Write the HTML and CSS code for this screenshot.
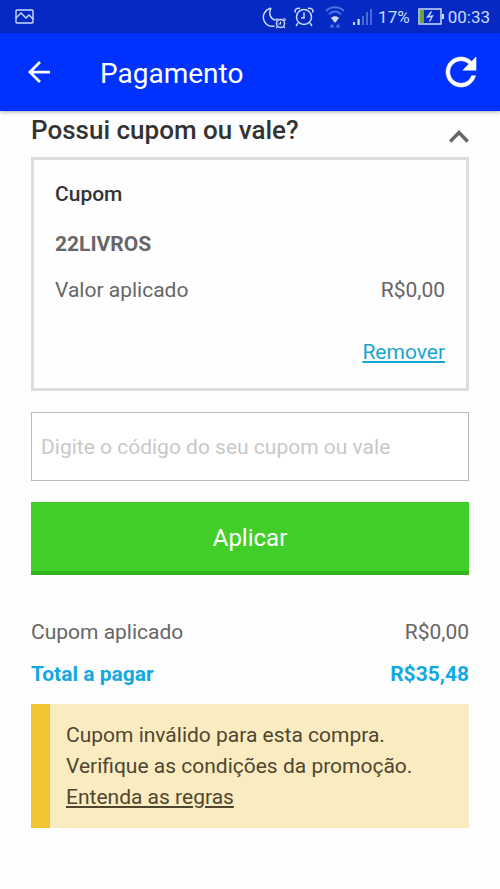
FILE: index.html
```html
<!DOCTYPE html>
<html lang="pt-BR">
<head>
<meta charset="utf-8">
<meta name="viewport" content="width=device-width, initial-scale=1">
<title>Pagamento</title>
<link rel="stylesheet" href="styles.css">
</head>
<body>
<div class="status-bar">
  <svg class="status-photo" width="20" height="16" viewBox="0 0 20 16" fill="none" stroke="currentColor" stroke-width="1.4"><rect x="1" y="1" width="17" height="13" rx="1"/><path d="M1 9l5-5 5 5 3-3 4 4"/></svg>
  <div class="status-icons">
    <svg width="24" height="24" viewBox="0 0 24 24" fill="none" stroke="currentColor" stroke-width="1.5"><path d="M9 1C3 3 0 8 2 13.500c1.500 4.500 6 6.500 10.500 5.500M9 1C6.500 6.500 8 11.500 13 13"/><circle cx="18.500" cy="16.500" r="4"/><path d="M18.500 14.500V17h-2M14 14v-2h2.500M23 14v-2h-2.500M15.500 19.500L14 21M21.500 19.500L23 21" stroke-width="1.200"/></svg>
    <svg width="20" height="22" viewBox="0 0 20 22" fill="none" stroke="currentColor" stroke-width="1.500"><circle cx="10" cy="11" r="7.500"/><path d="M10 6.500V12l-3 0M1.500 6.500c-1.500-3 1.500-5 4.500-4M18.500 6.500c1.500-3-1.500-5-4.500-4M4 17l-2 3M16 17l2 3"/></svg>
    <svg class="wifi" width="20" height="22" viewBox="0 0 20 22" fill="none"><g stroke="#4971df" stroke-width="1.800"><path d="M1 5c5-5 13-5 18 0"/><path d="M4 8.500c3-4 9-4 12 0"/></g><path d="M6 12c2-2.500 6-2.500 8 0l-4 5z" fill="currentColor"/><path d="M4.500 21.500L7 17.500l2.500 4zM10.500 21.500l2.500-4 2.500 4z" fill="#4971df"/></svg>
    <svg class="signal" width="20" height="18" viewBox="0 0 20 18"><path d="M0 14h2v3H0zM4.500 11h2.200v6H4.500z" fill="currentColor"/><path d="M9 8h2v9H9zM13 4h2v13h-2zM17 1h2v16h-2z" fill="#4669dc"/></svg>
    <span class="battery-level">17%</span>
    <svg class="battery" width="26" height="17" viewBox="0 0 26 17"><rect x="1" y="1" width="22" height="15" fill="none" stroke="currentColor" stroke-width="1.500"/><path d="M2 2h4v13H2z" fill="#6ba434"/><path d="M24 6h2v5h-2z" fill="currentColor"/><path d="M13.500 3.500l-4 5.500 5-1-3 5.500" fill="none" stroke="currentColor" stroke-width="1.300"/></svg>
    <span class="clock">00:33</span>
  </div>
</div>
<header class="app-bar">
  <button class="icon-button" type="button" aria-label="Voltar"><svg width="22" height="22" viewBox="4 4 16 16" fill="currentColor"><path d="M20 11H7.830l5.590-5.590L12 4l-8 8 8 8 1.410-1.410L7.830 13H20v-2z"/></svg></button>
  <h1 class="app-title">Pagamento</h1>
  <button class="icon-button" type="button" aria-label="Atualizar"><svg width="30" height="30" viewBox="4 4 16 16" fill="currentColor" stroke="currentColor" stroke-width="0.3"><path d="M17.650 6.350C16.200 4.900 14.210 4 12 4c-4.420 0-7.990 3.580-7.990 8s3.570 8 7.990 8c3.730 0 6.840-2.550 7.730-6h-2.080c-.82 2.330-3.040 4-5.650 4-3.310 0-6-2.690-6-6s2.690-6 6-6c1.660 0 3.140.69 4.220 1.780L13 11h7V4l-2.350 2.350z"/></svg></button>
</header>
<main class="content">
  <div class="section-head">
    <h2 class="section-title">Possui cupom ou vale?</h2>
    <button class="icon-button collapse" type="button" aria-label="Recolher"><svg width="20" height="14" viewBox="0 0 20 14" fill="none" stroke="currentColor" stroke-width="3.400"><path d="M1.300 12.500L10 3.500l8.700 9"/></svg></button>
  </div>
  <section class="coupon">
    <h3 class="coupon-title">Cupom</h3>
    <p class="coupon-code">22LIVROS</p>
    <div class="row"><span>Valor aplicado</span><span>R$0,00</span></div>
    <a class="remove" href="#">Remover</a>
  </section>
  <form class="coupon-form">
    <input class="field" type="text" aria-label="Código do cupom ou vale" placeholder="Digite o código do seu cupom ou vale">
    <button class="apply" type="button">Aplicar</button>
  </form>
  <div class="summary">
    <div class="row"><span>Cupom aplicado</span><span>R$0,00</span></div>
    <div class="row total"><span>Total a pagar</span><span>R$35,48</span></div>
  </div>
  <div class="alert" role="alert">
    <p>Cupom inválido para esta compra.</p>
    <p>Verifique as condições da promoção.</p>
    <a class="rules" href="#">Entenda as regras</a>
  </div>
</main>
</body>
</html>
```
FILE: styles.css
```css
* {
  box-sizing: border-box;
}

body {
  margin: 0;
  background: #fefefe;
  color: #666;
  font-family: Roboto, "Liberation Sans", sans-serif;
  font-size: 21px;
  line-height: 24px;
}

h1, h2, h3, p {
  margin: 0;
}

svg {
  display: block;
  flex: none;
}

button, input {
  font: inherit;
}

.status-bar {
  display: flex;
  align-items: center;
  justify-content: space-between;
  height: 33px;
  padding: 0 10px 0 15px;
  background: #0629c4;
  color: #c9dcfa;
}

.status-icons {
  display: flex;
  align-items: center;
  gap: 8px;
}

.status-icons > :first-child {
  margin-top: 4px;
}

.wifi {
  margin-left: 3px;
}

.signal {
  margin-right: -3px;
}

.battery-level,
.clock {
  font-size: 17px;
  line-height: 20px;
}

.clock {
  margin-left: -4px;
}

.app-bar {
  position: relative;
  display: flex;
  align-items: center;
  height: 78px;
  padding: 0 24px 0 28px;
  background: #0032ff;
  color: #fff;
  box-shadow: 0 1px 4px rgba(0, 0, 60, 0.35);
}

.app-title {
  flex: 1;
  margin-left: 50px;
  padding-top: 3px;
  font-size: 28px;
  font-weight: 400;
  line-height: 36px;
}

.icon-button {
  padding: 0;
  border: 0;
  background: none;
  color: inherit;
}

.icon-button svg {
  overflow: visible;
}

.content {
  padding: 3px 31px 24px;
}

.section-head {
  display: flex;
  align-items: center;
  justify-content: space-between;
  margin-bottom: 11px;
}

.section-title {
  color: #333;
  font-size: 26px;
  font-weight: 500;
  line-height: 32px;
}

.collapse {
  padding-top: 12px;
}

.coupon {
  display: flex;
  flex-direction: column;
  padding: 22px 21px 24px;
  border: 3px solid #ddd;
}

.coupon-title {
  color: #333;
  font-size: 21px;
  font-weight: 500;
}

.coupon-code {
  margin: 26px 0 22px;
  font-weight: 700;
}

.row {
  display: flex;
  justify-content: space-between;
}

.remove {
  align-self: flex-end;
  margin-top: 38px;
  color: #18a6d2;
}

.coupon-form {
  display: flex;
  flex-direction: column;
  gap: 21px;
  margin-top: 21px;
}

.field {
  width: 100%;
  height: 69px;
  padding: 0 9px;
  border: 1px solid #bbb;
  border-radius: 0;
  background: #fff;
  color: #333;
}

.field::placeholder {
  color: #c8c8c8;
  opacity: 1;
}

.apply {
  height: 73px;
  padding: 2px 0 0;
  border: 0;
  border-bottom: 4px solid #32b51b;
  background: #41ce29;
  color: #fff;
  font-size: 24px;
}

.summary {
  display: flex;
  flex-direction: column;
  gap: 18px;
  margin: 45px 0 18px;
}

.total {
  color: #12a8e0;
  font-weight: 700;
}

.alert {
  padding: 16px 16px 15px;
  border-left: 19px solid #efc532;
  background: #faecc0;
  color: #4f4630;
  line-height: 31px;
}

.rules {
  color: inherit;
}
```
